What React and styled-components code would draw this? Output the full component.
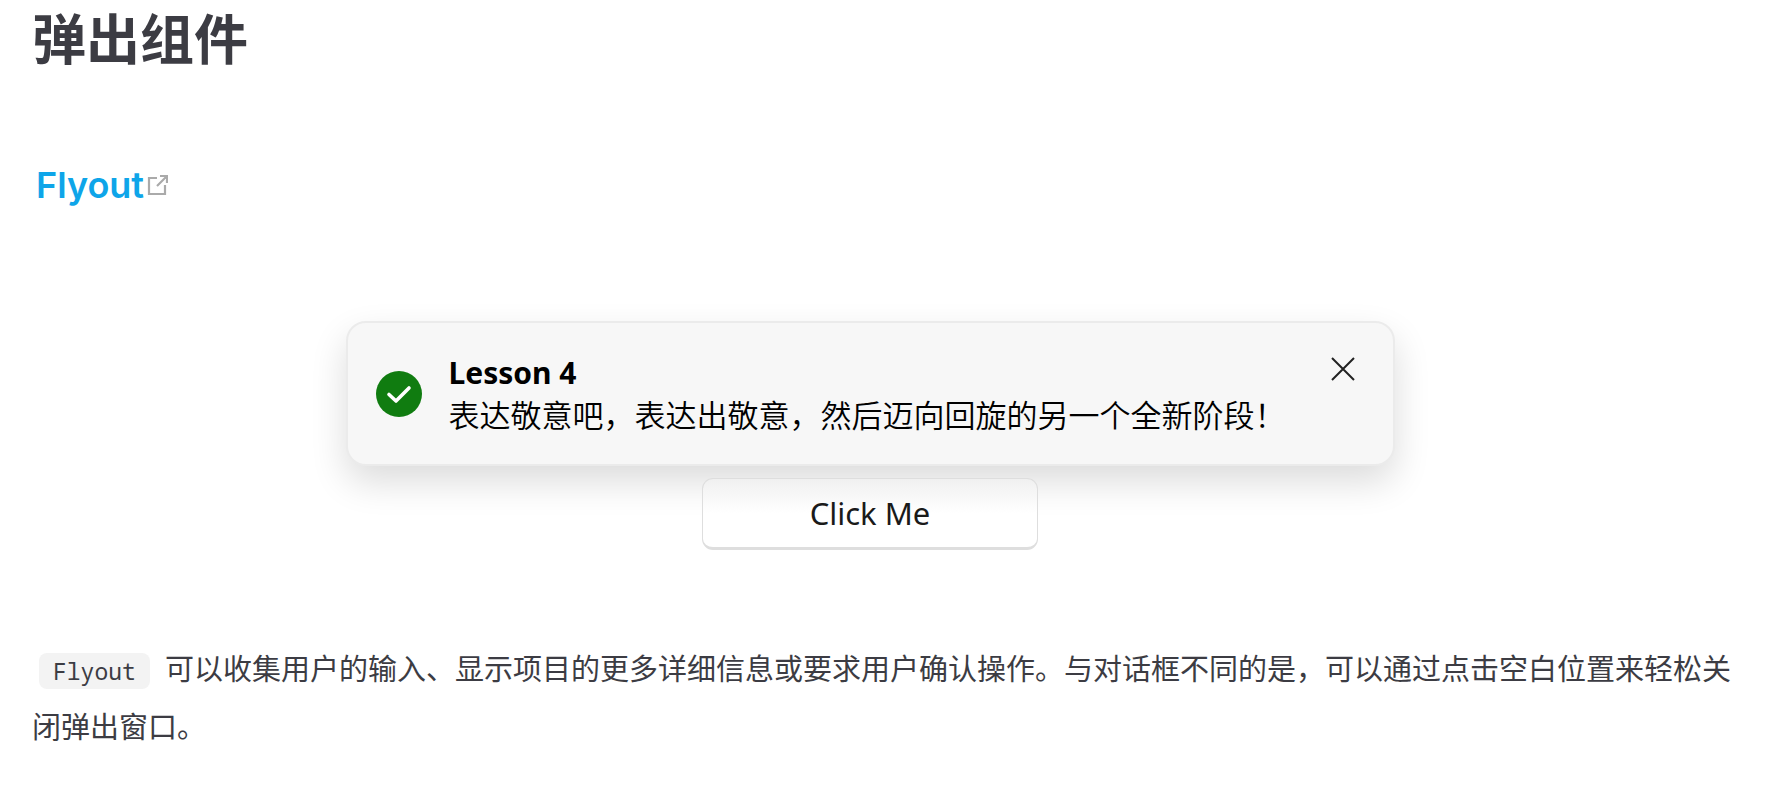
import React, { useState } from 'react';
import styled, { createGlobalStyle } from 'styled-components';

const GlobalStyle = createGlobalStyle`
  * {
    box-sizing: border-box;
  }

  body {
    margin: 0;
    background: #fff;
    color: #3c3c43;
    font-family: Inter, 'Noto Sans CJK SC', sans-serif;
  }
`;

const Page = styled.main`
  padding: 0 32px 32px;
`;

const Title = styled.h1`
  margin: 0;
  padding-top: 5px;
  font-size: 54px;
  line-height: 72px;
  font-weight: 700;
`;

const Subtitle = styled.h3`
  margin: 83px 0 0;
  padding-left: 4px;
  font-size: 36px;
  line-height: 50px;
  font-weight: 600;
`;

const DocLink = styled.a`
  display: inline-flex;
  align-items: center;
  gap: 2px;
  color: #0ea5e9;
  text-decoration: none;

  svg {
    width: 22px;
    height: 22px;
    color: #aaa;
  }
`;

const Demo = styled.section`
  display: flex;
  flex-direction: column;
  align-items: center;
  gap: 12px;
  margin-top: 111px;
  padding-right: 44px;
  font-family: 'Noto Sans', 'Noto Sans CJK SC', sans-serif;
  color: #000;
`;

const Flyout = styled.div`
  display: flex;
  align-items: center;
  gap: 27px;
  padding: 28px 32px 28px 28px;
  border: 2px solid #ebebeb;
  border-radius: 20px;
  background: #f7f7f7;
  box-shadow: 0 16px 36px rgba(0, 0, 0, 0.14);

  > svg {
    flex: none;
    width: 46px;
    height: 46px;
  }
`;

const FlyoutText = styled.div`
  padding-right: 12px;

  h4 {
    margin: 0;
    font-size: 30px;
    line-height: 44px;
    font-weight: 700;
  }

  p {
    margin: 0;
    font-size: 31px;
    line-height: 41px;
    font-weight: 350;
  }
`;

const CloseButton = styled.button`
  display: flex;
  align-self: flex-start;
  margin: 0;
  padding: 4px;
  border: 0;
  background: none;
  color: #222;
  cursor: pointer;

  svg {
    width: 28px;
    height: 28px;
  }
`;

const PushButton = styled.button`
  width: 336px;
  height: 72px;
  margin: 0;
  border: 1px solid #dedede;
  border-bottom: 3px solid #dedede;
  border-radius: 11px;
  background: linear-gradient(#f0f0f0, #fff 50%);
  color: #1a1a1a;
  font-family: inherit;
  font-size: 31px;
  cursor: pointer;
`;

const Paragraph = styled.p`
  margin: 91px 0 0;
  font-size: 29px;
  line-height: 58px;
`;

const Code = styled.code`
  display: inline-block;
  margin: 0 7px;
  padding: 0 14px;
  border-radius: 8px;
  background: #f3f3f3;
  font-family: 'Noto Sans Mono', 'Liberation Mono', monospace;
  font-size: 23px;
  line-height: 36px;
`;

const ExternalIcon = () => (
  <svg viewBox="0 0 22 22" fill="none" stroke="currentColor" strokeWidth="2.2" aria-hidden="true">
    <path d="M11 4H3V20H19V11" />
    <path d="M11 12L20 3M14 2H21V9" />
  </svg>
);

const SuccessIcon = () => (
  <svg viewBox="0 0 46 46" fill="none" aria-hidden="true">
    <circle cx="23" cy="23" r="23" fill="#107c10" />
    <path d="M13 23.5L20 30L33 17" stroke="#fff" strokeWidth="3.6" strokeLinecap="round" strokeLinejoin="round" />
  </svg>
);

const CloseIcon = () => (
  <svg viewBox="0 0 28 28" fill="none" stroke="currentColor" strokeWidth="2" aria-hidden="true">
    <path d="M3 3L25 25M25 3L3 25" />
  </svg>
);

const App = () => {
  const [open, setOpen] = useState(true);

  return (
    <>
      <GlobalStyle />
      <Page lang="zh-CN">
        <Title>弹出组件</Title>
        <Subtitle>
          <DocLink href="#flyout">
            Flyout
            <ExternalIcon />
          </DocLink>
        </Subtitle>
        <Demo>
          {open && (
            <Flyout role="status">
              <SuccessIcon />
              <FlyoutText>
                <h4>Lesson 4</h4>
                <p>表达敬意吧，表达出敬意，然后迈向回旋的另一个全新阶段！</p>
              </FlyoutText>
              <CloseButton type="button" aria-label="关闭" onClick={() => setOpen(false)}>
                <CloseIcon />
              </CloseButton>
            </Flyout>
          )}
          <PushButton type="button" onClick={() => setOpen(true)}>
            Click Me
          </PushButton>
        </Demo>
        <Paragraph>
          <Code>Flyout</Code> 可以收集用户的输入、显示项目的更多详细信息或要求用户确认操作。与对话框不同的是，可以通过点击空白位置来轻松关闭弹出窗口。
        </Paragraph>
      </Page>
    </>
  );
};

export default App;
